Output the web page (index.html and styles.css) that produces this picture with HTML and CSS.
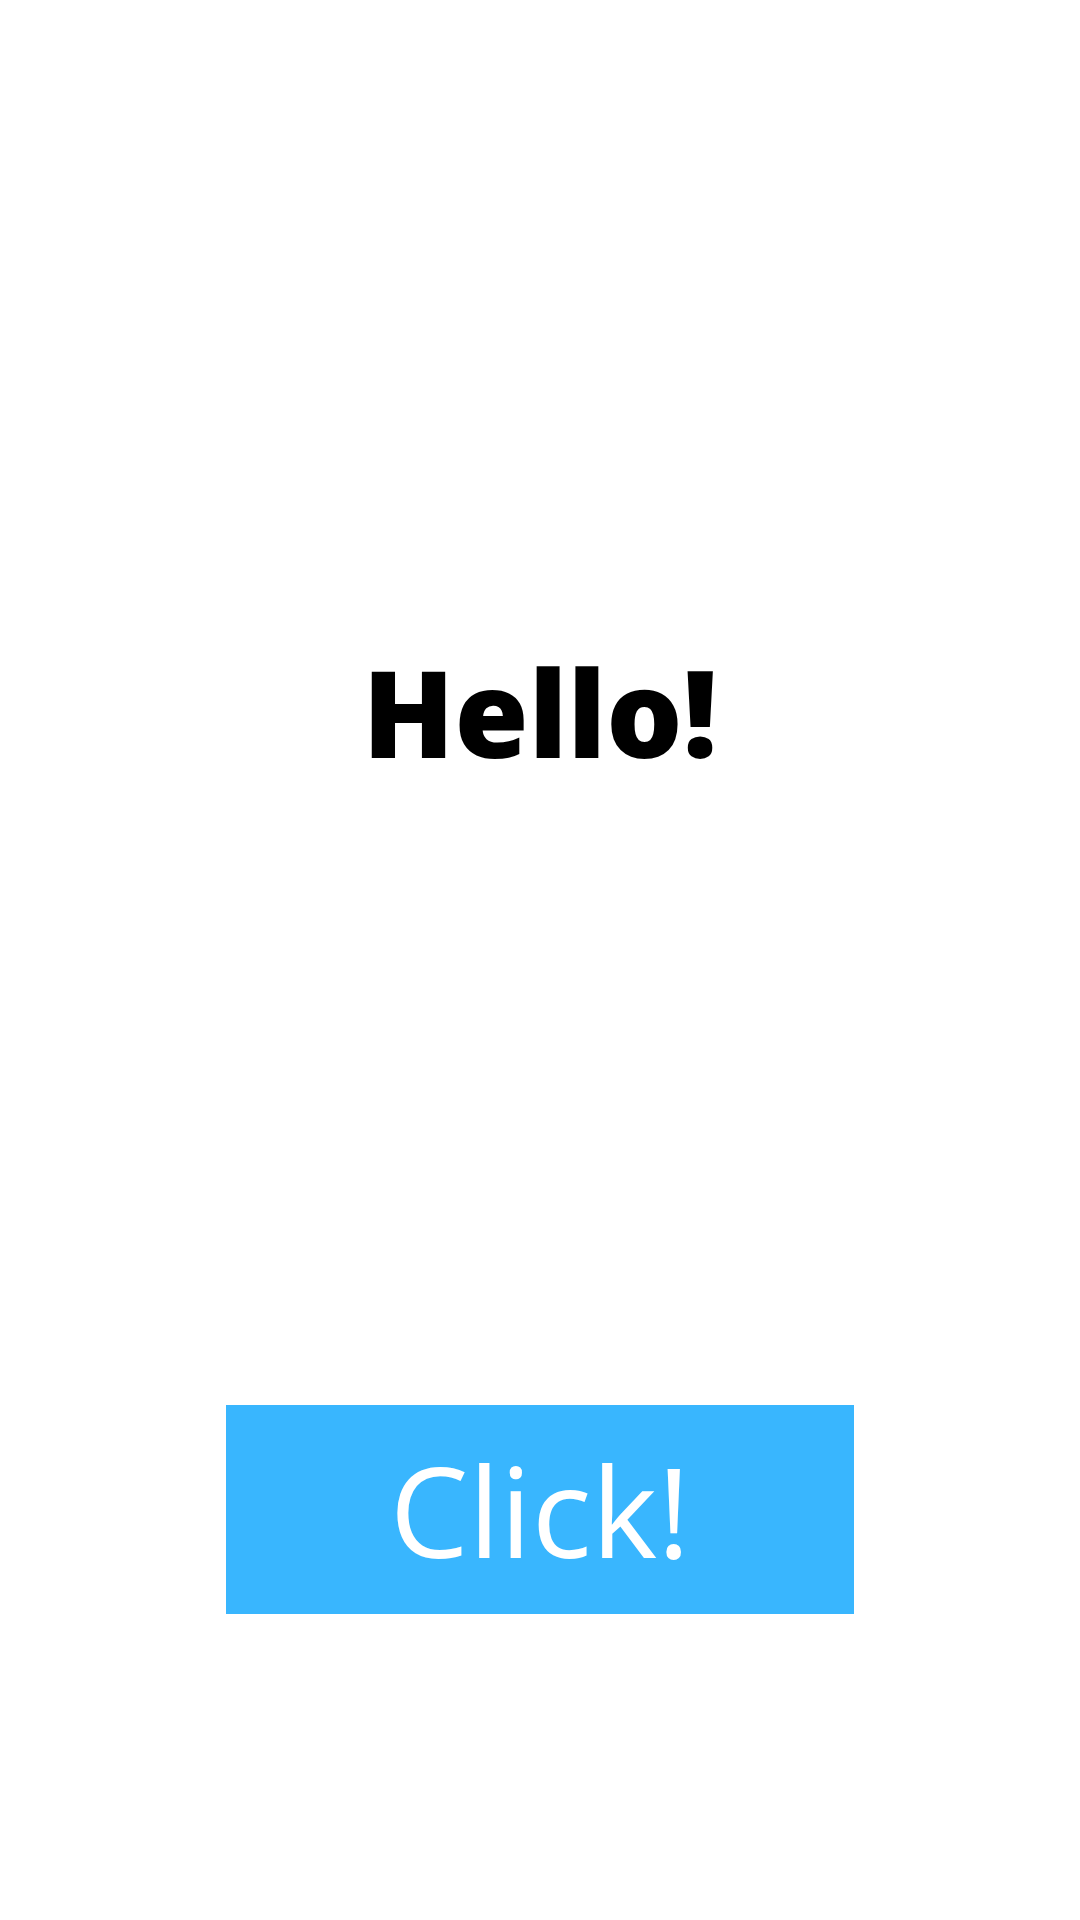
FILE: index.html
```html
<!DOCTYPE html>
<html lang="en">
<head>
<meta charset="utf-8">
<title>Hello</title>
<link rel="stylesheet" href="styles.css">
</head>
<body>
<main class="screen">
  <h1 class="title">Hello!</h1>
  <button class="btn" type="button">Click!</button>
</main>
</body>
</html>
```
FILE: styles.css
```css
html, body {
  margin: 0;
  padding: 0;
  background: #ffffff;
}
.screen {
  display: flex;
  flex-direction: column;
  align-items: center;
  height: 1920px;
  font-family: "Open Sans", "Noto Sans", sans-serif;
}
.title {
  margin: 652px 0 0 0;
  font-size: 120px;
  line-height: 1;
  font-weight: 800;
  color: #000000;
}
.btn {
  margin-top: 633px;
  width: 628px;
  height: 209px;
  border: none;
  padding: 0;
  background: #39b6fe;
  color: #ffffff;
  font-family: "Open Sans", "Noto Sans", sans-serif;
  font-size: 125px;
  font-weight: 400;
  line-height: normal;
  display: flex;
  align-items: center;
  justify-content: center;
}
```
